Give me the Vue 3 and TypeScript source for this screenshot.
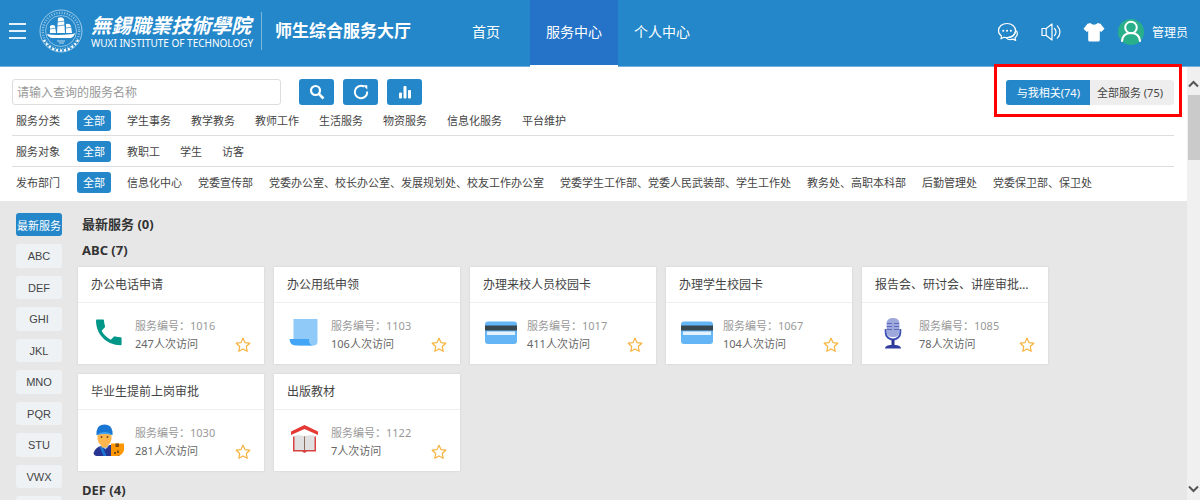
<script setup lang="ts">
import { ref } from 'vue'

interface Service { title: string; code: string; visits: number; icon: string }
interface Filter { label: string; wide: boolean; options: string[] }

const navItems = ['首页', '服务中心', '个人中心']
const activeNav = ref('服务中心')

const filters: Filter[] = [
  { label: '服务分类', wide: false, options: ['学生事务', '教学教务', '教师工作', '生活服务', '物资服务', '信息化服务', '平台维护'] },
  { label: '服务对象', wide: false, options: ['教职工', '学生', '访客'] },
  {
    label: '发布部门',
    wide: true,
    options: [
      '信息化中心',
      '党委宣传部',
      '党委办公室、校长办公室、发展规划处、校友工作办公室',
      '党委学生工作部、党委人民武装部、学生工作处',
      '教务处、高职本科部',
      '后勤管理处',
      '党委保卫部、保卫处',
    ],
  },
]

const letters = ['最新服务', 'ABC', 'DEF', 'GHI', 'JKL', 'MNO', 'PQR', 'STU', 'VWX', '']
const activeLetter = ref('最新服务')
const scope = ref('mine')
const keyword = ref('')

const services: Service[] = [
  { title: '办公电话申请', code: '1016', visits: 247, icon: 'phone' },
  { title: '办公用纸申领', code: '1103', visits: 106, icon: 'paper' },
  { title: '办理来校人员校园卡', code: '1017', visits: 411, icon: 'card' },
  { title: '办理学生校园卡', code: '1067', visits: 104, icon: 'card' },
  { title: '报告会、研讨会、讲座审批流程', code: '1085', visits: 78, icon: 'mic' },
  { title: '毕业生提前上岗审批', code: '1030', visits: 281, icon: 'worker' },
  { title: '出版教材', code: '1122', visits: 7, icon: 'book' },
]
</script>

<template>
  <div class="page">
    <header class="topbar">
      <div class="brand">
        <button class="menu" aria-label="菜单"><i></i><i></i><i></i></button>
        <svg class="seal" viewBox="0 0 44 44" aria-hidden="true">
          <circle cx="22" cy="22" r="21" fill="none" stroke="#b9daf0" stroke-width="0.8" />
          <circle cx="22" cy="22" r="18.2" fill="none" stroke="#8fc3e6" stroke-width="2.4" stroke-dasharray="1 1.6" />
          <circle cx="22" cy="22" r="15.500" fill="none" stroke="#b9daf0" stroke-width="0.7" />
          <path d="M5 31a19 19 0 0 0 34 0" fill="none" stroke="#fff" stroke-width="2.200" stroke-dasharray="2 2" />
          <path d="M19 9q4-2 6 1l1 14h-8zM11 17q3-2 5 0l1 7h-6zM27 15q4-1 5 2l1 7h-6z" fill="#fff" />
          <path d="M18 13l8-1M18 17l8-1M11 20l6-1M27 19l6-1" stroke="#2487c9" stroke-width="0.7" />
          <path d="M8 25q7 2 26 0l2-1q-1 4-4 5H13q-4-1-5-4z" fill="#fff" />
          <path d="M18 32h8M20 34h5" stroke="#b9daf0" stroke-width="1" />
        </svg>
        <div class="school">
          <span class="school-cn">無錫職業技術學院</span>
          <span class="school-en">WUXI INSTITUTE OF TECHNOLOGY</span>
        </div>
        <h1 class="site">师生综合服务大厅</h1>
      </div>
      <nav class="nav">
        <a v-for="n in navItems" :key="n" href="#" :class="{ active: n === activeNav }" @click.prevent="activeNav = n">{{ n }}</a>
      </nav>
      <div class="tools">
        <button class="tool" aria-label="消息">
          <svg viewBox="0 0 22 22" fill="none" stroke="#fff" stroke-width="1.2" stroke-linejoin="round">
            <path d="M10 2.500C5.200 2.500 1.500 5.600 1.500 9.700c0 2.200 1.100 4 3 5.300L4 17.800l3-1.600c1 .3 2 .4 3 .4 4.800 0 8.500-2.800 8.500-6.900S14.800 2.500 10 2.500z" />
            <path d="M19.300 9.500c1.700 2.800 1 5.500-1.300 7.300l.7 2.600-2.900-1.300c-2.400.8-5 .4-6.600-1.300M18.300 11c-1 3.600-4 5.400-7.500 5.500" />
            <path d="M6.200 9.700h.1M10 9.700h.1M13.800 9.700h.1" stroke-width="2" stroke-linecap="round" />
          </svg>
        </button>
        <button class="tool" aria-label="声音">
          <svg viewBox="0 0 22 22" fill="none" stroke="#fff" stroke-width="1.2" stroke-linejoin="round">
            <path d="M2 7.500h4.200L12 3v16l-5.800-4.500H2zM6.200 7.500v7" />
            <path d="M14.500 7.500c1.700 2 1.700 5 0 7M17.300 4.800c3.500 3.600 3.500 8.800 0 12.400" stroke-linecap="round" />
          </svg>
        </button>
        <button class="tool" aria-label="换肤">
          <svg viewBox="0 0 22 22" fill="#fff">
            <path d="M7.500 2c1.500 2.200 5.500 2.200 7 0l3 .8 4 5-3.300 3.100-1.400-1V19q0 1.500-1.500 1.500H6.700q-1.500 0-1.500-1.500V9.900l-1.400 1L.5 7.800l4-5z" />
          </svg>
        </button>
        <button class="user">
          <svg viewBox="0 0 26 26" aria-hidden="true">
            <circle cx="13" cy="13" r="13" fill="#29b08b" />
            <circle cx="13" cy="8.500" r="5.800" fill="none" stroke="#fff" stroke-width="2" />
            <path d="M4 22c.5-5 3.800-8 9-8s8.500 3 9 8" fill="none" stroke="#fff" stroke-width="2.200" stroke-linecap="round" />
          </svg>
          <span>管理员</span>
        </button>
      </div>
    </header>

    <div class="viewport">
      <div class="content">
        <section class="panel">
          <div class="search">
            <input v-model="keyword" type="text" placeholder="请输入查询的服务名称" aria-label="服务名称" />
            <button class="action" aria-label="查询">
              <svg viewBox="0 0 16 16" fill="none" stroke="#fff" stroke-width="2.2">
                <circle cx="6.500" cy="6.500" r="4.500" /><path d="M9.800 9.800l4.700 4.700" stroke-width="2.600" />
              </svg>
            </button>
            <button class="action" aria-label="刷新">
              <svg viewBox="0 0 16 16" fill="none" stroke="#fff" stroke-width="2">
                <path d="M11 2.600A6.200 6.200 0 1 0 14.200 7.500" /><path d="M10 1.200h4.300v4.300z" fill="#fff" stroke="none" />
              </svg>
            </button>
            <button class="action" aria-label="统计">
              <svg viewBox="0 0 16 16" fill="#fff">
                <rect x="2" y="8.500" width="3" height="6" rx="1" /><rect x="6.500" y="2" width="3" height="12.500" rx="1" /><rect x="11" y="6" width="3" height="8.500" rx="1" />
              </svg>
            </button>
            <div class="scope">
              <button :class="{ on: scope === 'mine' }" @click="scope = 'mine'">与我相关(74)</button>
              <button :class="{ on: scope === 'all' }" @click="scope = 'all'">全部服务 (75)</button>
              <span class="highlight"></span>
            </div>
          </div>
          <div v-for="f in filters" :key="f.label" class="filter">
            <span class="label">{{ f.label }}</span>
            <button class="pill">全部</button>
            <div class="options" :class="{ wide: f.wide }">
              <button v-for="o in f.options" :key="o">{{ o }}</button>
            </div>
          </div>
        </section>

        <div class="body">
          <aside class="letters">
            <button v-for="l in letters" :key="l" :class="{ on: l === activeLetter }" @click="activeLetter = l">{{ l }}</button>
          </aside>
          <main class="groups">
            <h2>最新服务 (0)</h2>
            <h2>ABC (7)</h2>
            <div class="cards">
              <article v-for="s in services" :key="s.code" class="card">
                <h3>{{ s.title }}</h3>
                <div class="detail">
                  <svg class="icon" viewBox="0 0 32 32" aria-hidden="true">
                    <path v-if="s.icon === 'phone'" fill="#009688" d="M3.500 2.500H10q1 0 1 1c0 2 .4 3.800 1 5.500q.2 1-.4 1.600l-3 3.100c2.200 4.200 5.300 7 9.200 9l3-3q.8-.6 1.500-.3c1.700.5 3.500.8 5.300.8q1 0 1 1v6q0 1-1 1C13.600 28.200 3 17.500 3 3.500z" />
                    <g v-else-if="s.icon === 'paper'">
                      <path d="M4.500 2h24v22.500q0 4-4 4h-15l-5-6z" fill="#90caf9" />
                      <path d="M.5 22H20q-.5 5.500 4 6.500H6.500Q1 28.500.5 22z" fill="#42a5f5" />
                    </g>
                    <g v-else-if="s.icon === 'card'">
                      <rect y="4.500" width="32" height="22.500" rx="3" fill="#64b5f6" />
                      <rect y="8.500" width="32" height="5" fill="#37474f" />
                      <rect x="2" y="14.500" width="28" height="3.500" fill="#e3f2fd" />
                    </g>
                    <g v-else-if="s.icon === 'mic'">
                      <path d="M8.700 12v3.500a7.300 7 0 0 0 14.600 0V12" fill="none" stroke="#3f51b5" stroke-width="2" />
                      <rect x="9.500" y="1" width="13" height="19" rx="5.500" fill="#9fa8da" />
                      <path d="M10 6.500h5M10 9.500h5M10 12.500h5M17 6.500h5M17 9.500h5M17 12.500h5" stroke="#5c6bc0" stroke-width="1.200" />
                      <path d="M14.500 22.500h3v6h-3z" fill="#283593" />
                      <path d="M8 31.500q0-3 5-3.500h6q5 .5 5 3.500z" fill="#303f9f" />
                    </g>
                    <g v-else-if="s.icon === 'worker'">
                      <path d="M.5 29q2-6 8-7l3-1h7q8 1 8 11H4q-3 0-3.500-3z" fill="#283593" />
                      <path d="M6.500 22.700L10.500 32h3l-4-10z" fill="#1976d2" />
                      <path d="M7.500 21h9l-4 4.500z" fill="#90caf9" />
                      <path d="M4.500 9h14v6q-1 5-4 6.500v2h-6v-2q-3-1.500-4-6.500z" fill="#ffb74d" />
                      <path d="M3.500 11V7.500q1-7 8-7t8 7V11q-7-3-16 0z" fill="#1976d2" />
                      <path d="M3 11q8.500-6 17 0-8.500-2-17 0z" fill="#42a5f5" />
                      <circle cx="8.500" cy="13" r="1" fill="#784719" /><circle cx="14.500" cy="13" r="1" fill="#784719" />
                      <path d="M18 19.500h13V26q-1 5.500-7 6h-6z" fill="#ff9800" />
                      <path d="M22.500 19.500H26V23h-3.500zM21 28h2v2h-2zM24 26.500h2V29h-2z" fill="#804c13" />
                    </g>
                    <g v-else>
                      <path d="M2 11l13.500-6L29 11V7.500L15.500 1 2 7.500z" fill="#e53935" />
                      <path d="M4 12.500h23v15h-9l-2.500 1.500-2.500-1.500H4z" fill="#d84343" />
                      <path d="M5.500 11.500q6-1 10 1 4-2 10-1V26h-20z" fill="#e0e0e0" />
                      <path d="M15.500 12.500V26" stroke="#8d6e63" stroke-width="1" />
                    </g>
                  </svg>
                  <div class="info">
                    <p class="code">服务编号：{{ s.code }}</p>
                    <p>{{ s.visits }}人次访问</p>
                  </div>
                  <button class="star" aria-label="收藏">
                    <svg viewBox="0 0 16 16" fill="none" stroke="#f5b23d" stroke-width="1.2" stroke-linejoin="round">
                      <path d="M8 1.200l2 4.400 4.800.6-3.500 3.300.9 4.800L8 12l-4.200 2.300.9-4.800L1.200 6.200 6 5.600z" />
                    </svg>
                  </button>
                </div>
              </article>
            </div>
            <h2>DEF (4)</h2>
          </main>
        </div>
      </div>
      <div class="scrollbar" aria-hidden="true">
        <svg viewBox="0 0 11 8"><path d="M1 6.500L5.500 2 10 6.500" /></svg>
        <span class="thumb"></span>
        <svg viewBox="0 0 11 8"><path d="M1 1.500L5.500 6 10 1.500" /></svg>
      </div>
    </div>
  </div>
</template>

<style>
body { margin: 0; }
</style>

<style scoped>
* { box-sizing: border-box; }
.page {
  display: flex;
  flex-direction: column;
  height: 100vh;
  overflow: hidden;
  font-family: "Noto Sans", "Noto Sans CJK SC", sans-serif;
  font-size: 11px;
  color: #444;
}
button {
  margin: 0;
  padding: 0;
  border: 0;
  background: none;
  font: inherit;
  color: inherit;
  white-space: nowrap;
  cursor: pointer;
}
h1, h2, h3, p { margin: 0; }
svg { display: block; }

.topbar {
  display: flex;
  flex: none;
  height: 67px;
  background: #2487c9;
  border-bottom: 1px solid #6fb0dc;
  color: #fff;
}
.brand { display: flex; flex: none; align-items: center; width: 442px; padding: 0 0 4px 9px; }
.menu { display: flex; flex-direction: column; gap: 5px; width: 17px; margin-right: 13px; }
.menu i { height: 2px; background: #e6f2fa; }
.seal { width: 44px; height: 44px; margin-right: 8px; }
.school { display: flex; flex-direction: column; width: 171px; height: 38px; border-right: 1px solid #7cb8e0; }
.school-cn { font-family: "Noto Sans CJK TC", sans-serif; font-size: 20px; font-weight: 700; font-style: italic; line-height: 25px; white-space: nowrap; }
.school-en { font-size: 10px; line-height: 13px; white-space: nowrap; }
.site { margin-left: 13px; font-size: 17px; font-weight: 700; line-height: 24px; white-space: nowrap; }
.nav { display: flex; }
.nav a {
  width: 88px;
  border-bottom: 1px solid transparent;
  font-size: 14px;
  line-height: 63px;
  text-align: center;
  color: #fff;
  text-decoration: none;
}
.nav a.active { background: #2573c8; border-bottom: 2px solid #fff; margin-bottom: -1px; }
.tools { display: flex; align-items: center; gap: 21px; margin-left: auto; padding: 0 12px 3px 0; }
.tool svg { width: 22px; height: 22px; }
.user { display: flex; align-items: center; gap: 8px; margin-left: -8px; font-size: 12px; }
.user svg { width: 26px; height: 26px; }

.viewport { display: flex; flex: 1; min-height: 0; }
.content { flex: 1; min-width: 0; background: #e7e7e7; }
.panel { padding: 12px 13px 4px 12px; background: #fff; }
.search { display: flex; align-items: center; gap: 9px; height: 26px; }
.search input {
  width: 269px;
  height: 26px;
  margin-right: 9px;
  padding: 0 4px;
  border: 1px solid #ddd;
  border-radius: 3px;
  font: inherit;
  font-size: 12px;
  color: #444;
}
.search input::placeholder { color: #999; }
.action { display: grid; place-items: center; width: 35px; height: 26px; border-radius: 3px; background: #2487c9; }
.action svg { width: 16px; height: 16px; }
.scope { position: relative; display: flex; margin-left: auto; border-radius: 3px; background: #eee; }
.scope button { height: 25px; padding: 0 11px 0 7px; border-radius: 0 3px 3px 0; }
.scope button:first-child { padding: 0 10px 0 11px; border-radius: 3px 0 0 3px; }
.scope .on { background: #2487c9; color: #fff; }
.highlight { position: absolute; inset: -16px -8px -12px -12px; border: 3px solid #f00; pointer-events: none; }

.filter { display: flex; align-items: center; height: 31px; padding-left: 4px; border-bottom: 1px solid #ddd; }
.filter:last-child { height: 30px; border-bottom: 0; }
.label { width: 61px; }
.pill { width: 34px; height: 21px; margin-right: 16px; border-radius: 3px; background: #2487c9; color: #fff; }
.options { display: flex; gap: 20px; }
.options.wide { gap: 16px; }

.body { display: flex; gap: 16px; padding: 10px 13px 0 16px; }
.letters {
  display: grid;
  flex: none;
  grid-auto-rows: 23px 24px;
  gap: 8px;
  width: 46px;
  height: 300px;
  padding-top: 2px;
}
.letters button { border-radius: 3px; background: #eff2f5; font-family: "Liberation Sans", "Noto Sans CJK SC", sans-serif; }
.letters .on { background: #2487c9; color: #fff; }
.groups { flex: 1; min-width: 0; }
.groups h2 { padding-left: 4px; font-size: 13px; line-height: 26px; color: #333; }
.cards { display: grid; grid-template-columns: repeat(auto-fill, 186px); gap: 10px; margin: 4px 0 6px; }
.card { height: 97px; background: #fff; box-shadow: 0 0 2px #ccc; }
.card h3 {
  height: 36px;
  padding: 0 13px;
  border-bottom: 1px solid #eee;
  overflow: hidden;
  font-size: 12px;
  font-weight: 400;
  line-height: 36px;
  text-overflow: ellipsis;
  white-space: nowrap;
}
.detail { display: flex; padding: 14px 13px 0 15px; }
.icon { width: 32px; height: 32px; margin-right: 10px; }
.info { flex: 1; line-height: 18px; color: #666; white-space: nowrap; }
.info .code { color: #999; }
.star { align-self: flex-end; }
.star svg { width: 16px; height: 16px; }

.scrollbar { display: flex; flex: none; flex-direction: column; align-items: center; width: 13px; padding: 13px 0 7px; background: #f0f0f0; }
.scrollbar svg { flex: none; width: 11px; height: 8px; fill: none; stroke: #555; stroke-width: 2; }
.thumb { width: 12px; height: 65px; margin: 7px 0 auto; background: #cacaca; }
</style>
